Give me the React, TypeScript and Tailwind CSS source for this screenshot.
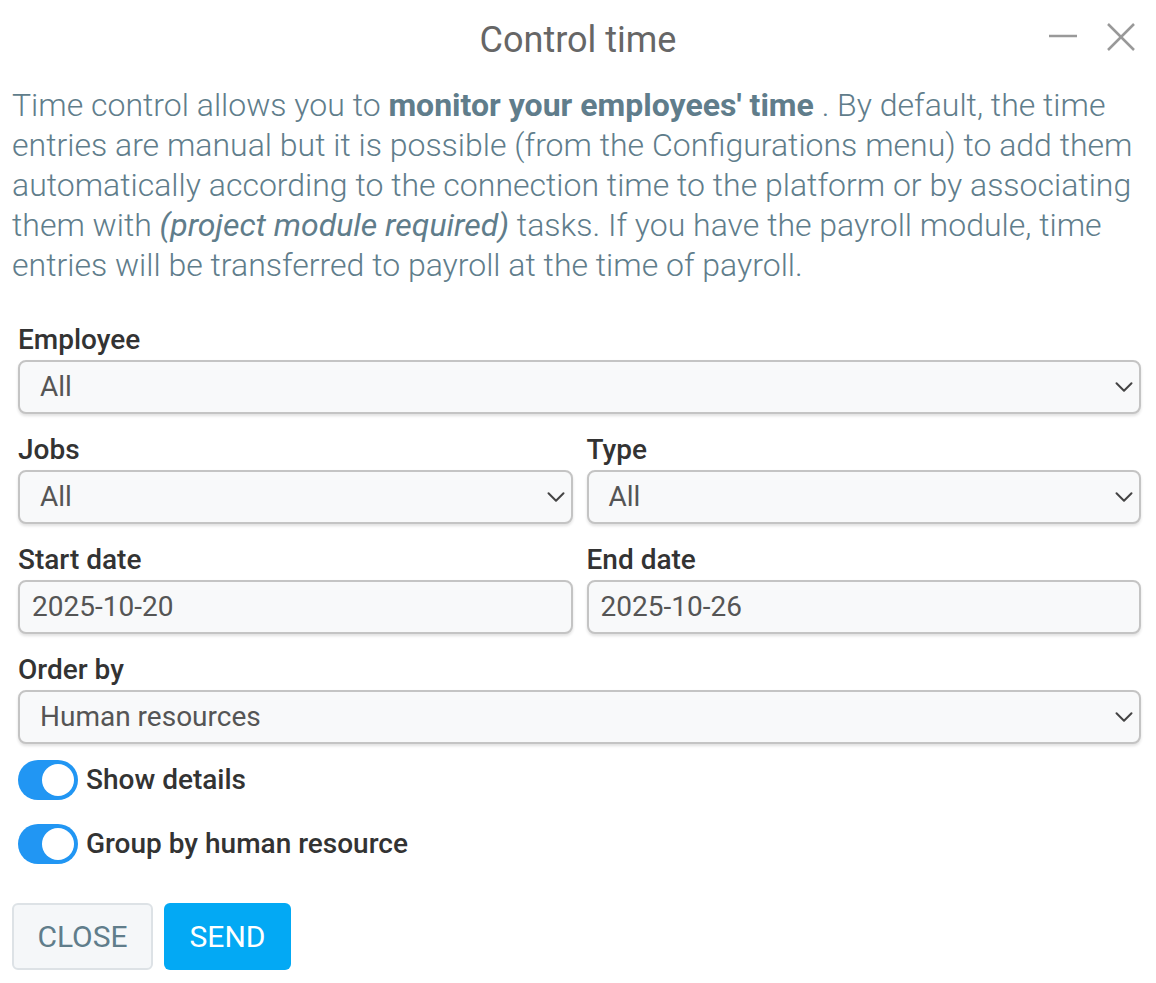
import { ChevronDown } from "lucide-react";

function Select({ value }: { value: string }) {
  return (
    <div className="flex h-[54px] items-center justify-between rounded-lg border-2 border-[#c4c4c4] bg-[#f8f9fa] pl-[20px] pr-0 shadow-[0_2px_3px_rgba(0,0,0,0.12)]">
      <span className="text-[28px] text-[#555]">{value}</span>
      <ChevronDown size={30} strokeWidth={1.6} className="text-[#444]" />
    </div>
  );
}

function DateInput({ value }: { value: string }) {
  return (
    <div className="flex h-[54px] items-center rounded-lg border-2 border-[#c4c4c4] bg-[#f8f9fa] pl-[12px] shadow-[0_2px_3px_rgba(0,0,0,0.12)]">
      <span className="text-[28px] text-[#555]">{value}</span>
    </div>
  );
}

function Field({ label, children }: { label: string; children: React.ReactNode }) {
  return (
    <div className="flex flex-col gap-[5px]">
      <label className="h-[30px] text-[28px] font-medium leading-[30px] text-[#333]">{label}</label>
      {children}
    </div>
  );
}

function Toggle({ label }: { label: string }) {
  return (
    <div className="flex h-[40px] items-center">
      <div className="flex h-[40px] w-[60px] items-center justify-end rounded-full bg-[#2196f3] pr-[4px]">
        <div className="h-[32px] w-[32px] rounded-full bg-white" />
      </div>
      <span className="ml-[8px] text-[28px] font-medium text-[#333]">{label}</span>
    </div>
  );
}

export default function App() {
  return (
    <div className="min-h-[983px] w-[1156px] bg-white font-['Roboto',sans-serif]">
      {/* Header */}
      <header className="relative flex h-[80px] items-center justify-center">
        <h1 className="text-[36px] font-normal text-[#666]">Control time</h1>
        <div className="absolute right-[20px] top-[22px] flex items-center gap-[28px] text-[#999]">
          <svg width="30" height="30" viewBox="0 0 30 30">
            <line x1="1" y1="14" x2="29" y2="14" stroke="currentColor" strokeWidth="2.5" />
          </svg>
          <svg width="30" height="30" viewBox="0 0 30 30">
            <line x1="2" y1="2" x2="28" y2="28" stroke="currentColor" strokeWidth="2.5" />
            <line x1="28" y1="2" x2="2" y2="28" stroke="currentColor" strokeWidth="2.5" />
          </svg>
        </div>
      </header>

      {/* Description */}
      <p className="mt-[5px] px-[12px] text-[32px] font-light leading-[40px] text-[#607d8b]">
        Time control allows you to <b className="font-bold">monitor your employees' time</b> . By default, the time
        entries are manual but it is possible (from the Configurations menu) to add them automatically according to
        the connection time to the platform or by associating them with{" "}
        <i className="font-normal">(project module required)</i> tasks. If you have the payroll module, time entries
        will be transferred to payroll at the time of payroll.
      </p>

      {/* Form */}
      <div className="mt-[40px] flex flex-col gap-[21px] pl-[18px] pr-[15px]">
        <Field label="Employee">
          <Select value="All" />
        </Field>
        <div className="grid grid-cols-2 gap-[14px]">
          <Field label="Jobs">
            <Select value="All" />
          </Field>
          <Field label="Type">
            <Select value="All" />
          </Field>
        </div>
        <div className="grid grid-cols-2 gap-[14px]">
          <Field label="Start date">
            <DateInput value="2025-10-20" />
          </Field>
          <Field label="End date">
            <DateInput value="2025-10-26" />
          </Field>
        </div>
        <Field label="Order by">
          <Select value="Human resources" />
        </Field>
      </div>

      <div className="mt-[16px] flex flex-col gap-[24px] pl-[18px]">
        <Toggle label="Show details" />
        <Toggle label="Group by human resource" />
      </div>

      {/* Actions */}
      <div className="mt-[39px] flex gap-[11px] pl-[12px]">
        <button className="h-[67px] w-[141px] rounded-md border-2 border-[#dde2e6] bg-[#f5f7f9] text-[30px] uppercase text-[#607d8b]">
          Close
        </button>
        <button className="h-[67px] w-[127px] rounded-md bg-[#03a9f4] text-[30px] uppercase text-white">Send</button>
      </div>
    </div>
  );
}
